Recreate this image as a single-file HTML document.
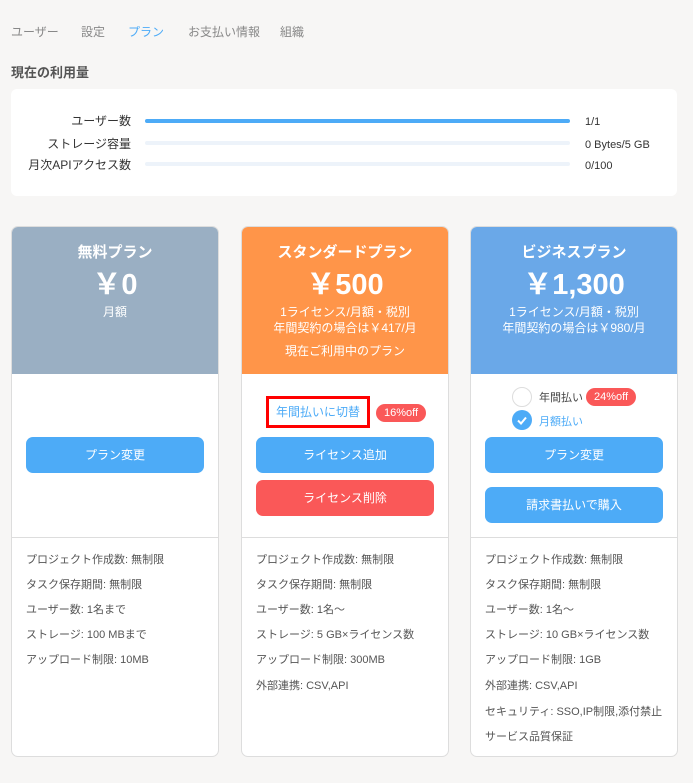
<!DOCTYPE html>
<html><head><meta charset="utf-8"><style>
*{box-sizing:border-box;margin:0;padding:0}
body{width:693px;height:783px;background:#f7f6f5;font-family:"Liberation Sans","Noto Sans CJK JP",sans-serif;position:relative;overflow:hidden;color:#444}
.a{position:absolute;white-space:nowrap}
.tab{top:23px;font-size:12px;color:#888}
.card{position:absolute;top:226px;width:208px;height:531px;background:#fff;border:1px solid #ddd;border-radius:7px;overflow:hidden}
.hd{position:absolute;left:0;top:0;right:0;height:147px;color:#fff;text-align:center}
.hd .t{position:absolute;left:0;right:0;top:16px;font-size:15px;font-weight:bold;line-height:20px}
.hd .p{position:absolute;left:0;right:0;top:42px;font-size:29px;font-weight:bold;line-height:32px}
.hd .s{position:absolute;left:0;right:0;font-size:12px;line-height:16px}
.div{position:absolute;left:0;right:0;top:310px;border-top:1px solid #ddd}
.ft{position:absolute;left:14px;font-size:11px;color:#555}
.btn{position:absolute;left:14px;width:178px;height:36px;border-radius:7px;background:#4dabf7;color:#fff;font-size:12px;text-align:center;line-height:36px}
.bar{position:absolute;left:145px;width:425px;height:4px;border-radius:2px;background:#edf3fa}
.lab{position:absolute;right:562px;font-size:12px;color:#333}
.val{position:absolute;left:585px;font-size:11px;color:#333}
.badge{position:absolute;background:#fa5858;color:#fff;font-size:11px;border-radius:9px;height:18px;line-height:18px;padding:0 8px}
</style></head><body>
<div class="a tab" style="left:11px">ユーザー</div>
<div class="a tab" style="left:81px">設定</div>
<div class="a tab" style="left:128px;color:#4dabf7">プラン</div>
<div class="a tab" style="left:188px">お支払い情報</div>
<div class="a tab" style="left:280px">組織</div>
<div class="a" style="left:11px;top:62px;font-size:13px;font-weight:bold;color:#555">現在の利用量</div>
<div class="a" style="left:11px;top:89px;width:666px;height:107px;background:#fff;border-radius:6px"></div>
<div class="lab" style="top:112px">ユーザー数</div>
<div class="lab" style="top:135px">ストレージ容量</div>
<div class="lab" style="top:156px">月次APIアクセス数</div>
<div class="bar" style="top:119px;background:#4dabf7"></div>
<div class="bar" style="top:141px"></div>
<div class="bar" style="top:162px"></div>
<div class="val" style="top:116px">1/1</div>
<div class="val" style="top:139px">0 Bytes/5 GB</div>
<div class="val" style="top:160px">0/100</div>

<div class="card" style="left:11px">
<div class="hd" style="background:#9aafc3"><div class="t">無料プラン</div><div class="p">￥0</div><div class="s" style="top:77px">月額</div></div>
<div class="btn" style="top:210px">プラン変更</div>
<div class="div"></div>
<div class="ft" style="top:324px">プロジェクト作成数: 無制限</div>
<div class="ft" style="top:349px">タスク保存期間: 無制限</div>
<div class="ft" style="top:374px">ユーザー数: 1名まで</div>
<div class="ft" style="top:399px">ストレージ: 100 MBまで</div>
<div class="ft" style="top:424px">アップロード制限: 10MB</div>
</div>

<div class="card" style="left:241px">
<div class="hd" style="background:#ff9549"><div class="t">スタンダードプラン</div><div class="p">￥500</div><div class="s" style="top:77px">1ライセンス/月額・税別<br>年間契約の場合は￥417/月</div><div class="s" style="top:116px">現在ご利用中のプラン</div></div>
<div class="a" style="left:24px;top:169px;width:104px;height:32px;border:3px solid #f00;color:#4dabf7;font-size:12px;text-align:center;line-height:26px">年間払いに切替</div>
<div class="badge" style="left:134px;top:177px">16%off</div>
<div class="btn" style="top:210px">ライセンス追加</div>
<div class="btn" style="top:253px;background:#fa5858">ライセンス削除</div>
<div class="div"></div>
<div class="ft" style="top:324px">プロジェクト作成数: 無制限</div>
<div class="ft" style="top:349px">タスク保存期間: 無制限</div>
<div class="ft" style="top:374px">ユーザー数: 1名～</div>
<div class="ft" style="top:399px">ストレージ: 5 GB×ライセンス数</div>
<div class="ft" style="top:424px">アップロード制限: 300MB</div>
<div class="ft" style="top:450px">外部連携: CSV,API</div>
</div>

<div class="card" style="left:470px">
<div class="hd" style="background:#6aa8e8"><div class="t">ビジネスプラン</div><div class="p">￥1,300</div><div class="s" style="top:77px">1ライセンス/月額・税別<br>年間契約の場合は￥980/月</div></div>
<div class="a" style="left:41px;top:160px;width:20px;height:20px;border:1px solid #ddd;border-radius:50%"></div>
<div class="a" style="left:68px;top:162px;font-size:11px;color:#444">年間払い</div>
<div class="badge" style="left:115px;top:161px">24%off</div>
<div class="a" style="left:41px;top:183px;width:20px;height:20px;background:#4dabf7;border-radius:50%"><svg width="20" height="20"><path d="M6 10.5l3 3 5-6" stroke="#fff" stroke-width="2" fill="none"/></svg></div>
<div class="a" style="left:68px;top:186px;font-size:11px;color:#4dabf7">月額払い</div>
<div class="btn" style="top:210px">プラン変更</div>
<div class="btn" style="top:260px">請求書払いで購入</div>
<div class="div"></div>
<div class="ft" style="top:324px">プロジェクト作成数: 無制限</div>
<div class="ft" style="top:349px">タスク保存期間: 無制限</div>
<div class="ft" style="top:374px">ユーザー数: 1名～</div>
<div class="ft" style="top:399px">ストレージ: 10 GB×ライセンス数</div>
<div class="ft" style="top:424px">アップロード制限: 1GB</div>
<div class="ft" style="top:450px">外部連携: CSV,API</div>
<div class="ft" style="top:476px">セキュリティ: SSO,IP制限,添付禁止</div>
<div class="ft" style="top:501px">サービス品質保証</div>
</div>
</body></html>
